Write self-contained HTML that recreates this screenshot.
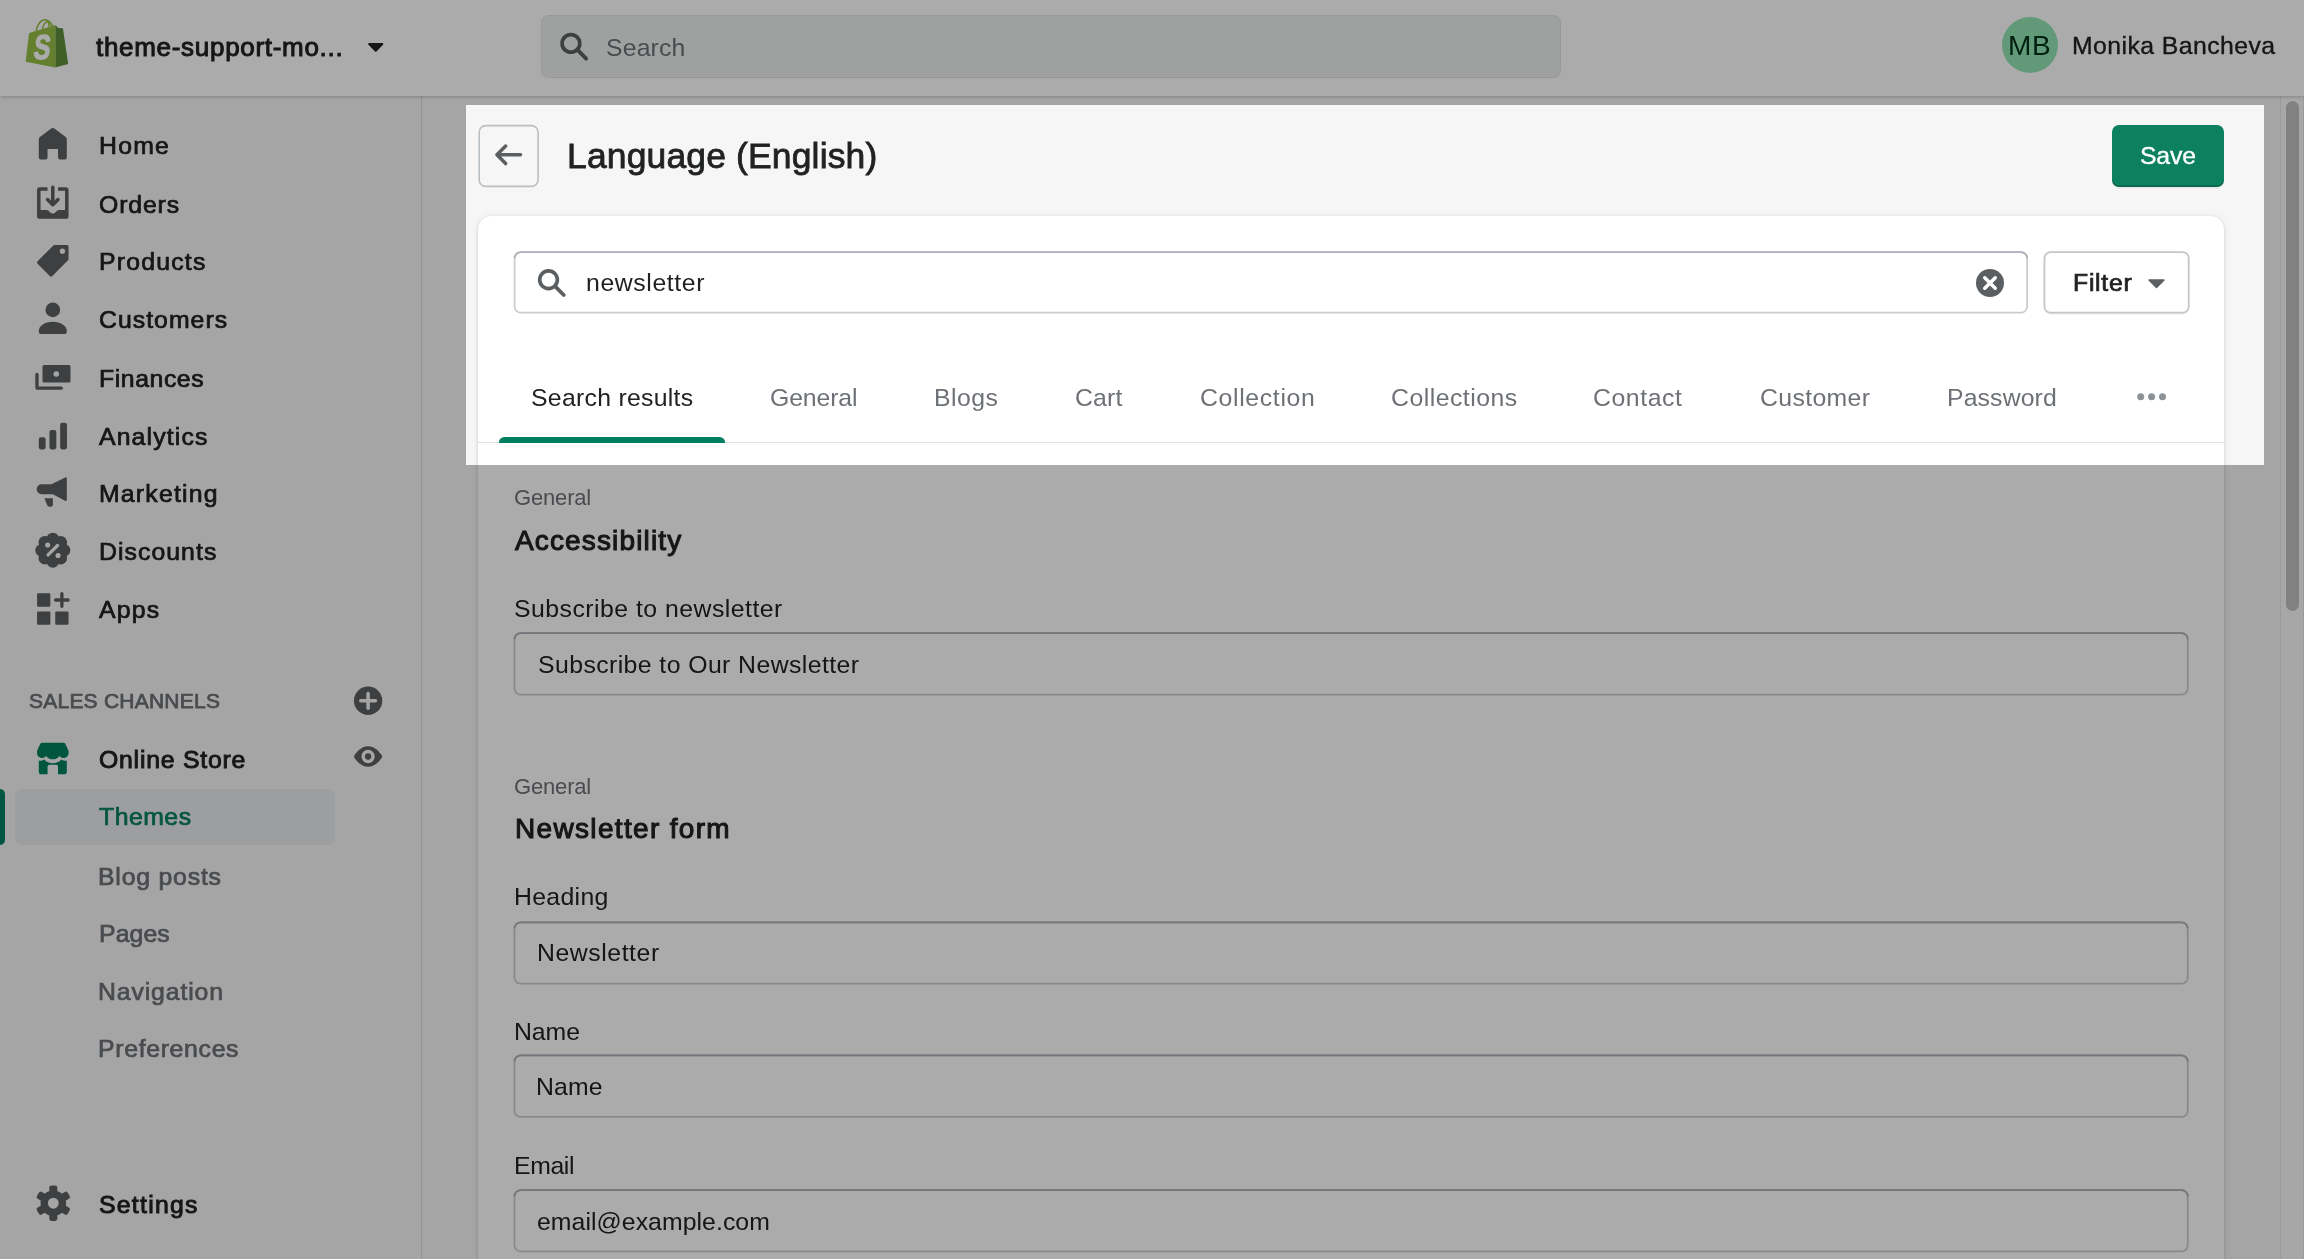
<!DOCTYPE html>
<html lang="en">
<head>
<meta charset="utf-8">
<title>Language (English) - Themes - Shopify</title>
<style>
*{box-sizing:border-box;margin:0;padding:0}
html,body{width:2304px;height:1259px;overflow:hidden;background:#f6f6f7}
body{position:relative;font-family:"Liberation Sans",sans-serif;color:#202223;-webkit-font-smoothing:antialiased}
.abs,.t,svg.i{position:absolute}
.t{display:block;line-height:1;white-space:nowrap;will-change:transform;font-weight:400;font-style:normal;text-decoration:none;margin:0;padding:0}
svg.i{display:block;overflow:visible;will-change:transform}
#topbar{left:0;top:0;width:2304px;height:96px;background:#fff;box-shadow:0 2px 3.5px -1px rgba(0,0,0,.22)}
#tsearch{left:541px;top:15px;width:1020px;height:63px;background:#eef0ef;border:1px solid #e1e3e3;border-radius:7.5px}
#avatar{left:2001.5px;top:17px;width:56px;height:56px;border-radius:50%;background:#92e6b5}
#sidebar{left:0;top:96px;width:422px;height:1163px;background:#f6f6f7;border-right:1px solid #dcdee0}
#sel{left:14.5px;top:789px;width:320.5px;height:55.5px;border-radius:7px;background:#ebecef}
#selbar{left:0;top:789px;width:5px;height:55.5px;border-radius:0 7px 7px 0;background:#008060}
#back{left:478.5px;top:125px;width:60.5px;height:61.5px;border:2px solid #c1c5c9;border-radius:7.5px}
#save{left:2112px;top:125px;width:112px;height:61.5px;border-radius:7px;background:#0c805f;box-shadow:0 1.75px 0 rgba(0,0,0,.05),inset 0 -1.75px 0 rgba(0,0,0,.2)}
#card{left:478px;top:215.5px;width:1745.5px;height:1100px;border-radius:14px;background:#fff;box-shadow:0 0 8.75px rgba(23,24,24,.05),0 1.75px 3.5px rgba(0,0,0,.15)}
.inp{left:514px;width:1675px;height:63px;border:2px solid #cfd2d5;border-top-color:#b5babf;border-radius:7.5px;background:#fff}
#filter{left:2043.5px;top:251px;width:146px;height:63px;border:2px solid #cfd2d5;border-radius:7px;background:#fff;box-shadow:0 1.75px 0 rgba(0,0,0,.05)}
#tabline{left:478px;top:442px;width:1745.5px;height:1px;background:#dfe1e3}
#tabind{left:498.75px;top:436.75px;width:226px;height:6px;border-radius:5.25px 5.25px 0 0;background:#008060}
#strack{left:2280px;top:96px;width:24px;height:1163px;background:#fafafa;border-left:1px solid #e6e6e6;border-right:1px solid #e6e6e6}
#sthumb{left:2285.5px;top:100.5px;width:13.25px;height:510.25px;border-radius:7px;background:#c1c1c1}
#hl{left:465.5px;top:105px;width:1798px;height:360px;box-shadow:0 0 0 4000px rgba(0,0,0,.33);z-index:50;pointer-events:none}

</style>
</head>
<body>
<main>
<div id="card" class="abs"></div>
<div id="save" class="abs"></div>
<div id="tabline" class="abs"></div>
<div id="tabind" class="abs"></div>
<svg class="i" style="left:0px;top:0px" width="2304" height="1259" viewBox="0 0 2304 1259" fill="none"><rect x="514.58" y="252.07" width="1512.55" height="60.55" rx="6.2" fill="#fff" stroke="#c9cccf" stroke-width="1.75"/><path d="M514.58 258.27a6.2 6.2 0 0 1 6.2-6.2H2020.92a6.2 6.2 0 0 1 6.2 6.2" stroke="#aeb4b9" stroke-width="1.75"/><rect x="2044.47" y="253.27" width="144.25" height="60.55" rx="6.2" stroke="rgba(0,0,0,.06)" stroke-width="1.75"/><rect x="2044.47" y="252.07" width="144.25" height="60.55" rx="6.2" fill="#fff" stroke="#c3c7cb" stroke-width="1.75"/><rect x="514.48" y="633.08" width="1673.25" height="61.65" rx="6.2" fill="#fff" stroke="#c9cccf" stroke-width="1.75"/><path d="M514.48 639.28a6.2 6.2 0 0 1 6.2-6.2H2181.53a6.2 6.2 0 0 1 6.2 6.2" stroke="#aeb4b9" stroke-width="1.75"/><rect x="514.48" y="922.33" width="1673.25" height="61.25" rx="6.2" fill="#fff" stroke="#c9cccf" stroke-width="1.75"/><path d="M514.48 928.53a6.2 6.2 0 0 1 6.2-6.2H2181.53a6.2 6.2 0 0 1 6.2 6.2" stroke="#aeb4b9" stroke-width="1.75"/><rect x="514.48" y="1055.38" width="1673.25" height="61.45" rx="6.2" fill="#fff" stroke="#c9cccf" stroke-width="1.75"/><path d="M514.48 1061.58a6.2 6.2 0 0 1 6.2-6.2H2181.53a6.2 6.2 0 0 1 6.2 6.2" stroke="#aeb4b9" stroke-width="1.75"/><rect x="514.48" y="1190.08" width="1673.25" height="61.25" rx="6.2" fill="#fff" stroke="#c9cccf" stroke-width="1.75"/><path d="M514.48 1196.28a6.2 6.2 0 0 1 6.2-6.2H2181.53a6.2 6.2 0 0 1 6.2 6.2" stroke="#aeb4b9" stroke-width="1.75"/></svg>
<svg class="i" style="left:477px;top:123px" width="64" height="66" viewBox="0 0 64 66"><rect x="2.200" y="2.600" width="58.900" height="60.800" rx="6.600" fill="none" stroke="#babfc3" stroke-width="1.600"/></svg>
<svg class="i" style="left:490px;top:137px" width="35" height="35" viewBox="0 0 20 20" fill="#5c5f62"><g transform="translate(0.343 0.171)"><path d="M17.100 10H4M8.600 5L3.600 10l5 5" stroke="#5c5f62" stroke-width="2" stroke-linecap="round" stroke-linejoin="round" fill="none"/></g></svg>
<svg class="i" style="left:534px;top:265px" width="35" height="35" viewBox="0 0 20 20" fill="#5c5f62"><circle cx="8.300" cy="8.450" r="5.050" fill="none" stroke="#5c5f62" stroke-width="2.100"/><path d="M12.200 12.350l4.800 4.800" stroke="#5c5f62" stroke-width="2.200" stroke-linecap="round" fill="none"/></svg>
<svg class="i" style="left:1972px;top:265px" width="35" height="35" viewBox="0 0 20 20" fill="#5c5f62"><g transform="translate(0.286 0.286)"><circle cx="10" cy="10" r="8"/><path d="M7 7l6 6M13 7l-6 6" stroke="#fff" stroke-width="2" stroke-linecap="round" fill="none"/></g></svg>
<svg class="i" style="left:2148px;top:279px" width="17" height="10" viewBox="0 0 17 10" fill="#5c5f62"><path transform="translate(0 .250)" d="M1 0h15a.700.700 0 0 1 .5 1.200L9 8.700a.700.700 0 0 1-1 0L.5 1.200A.700.700 0 0 1 1 0z"/></svg>
<svg class="i" style="left:2137px;top:393px" width="30" height="8" viewBox="0 0 30 8" fill="#8c9196"><circle cx="3.700" cy="3.800" r="3.500"/><circle cx="14.600" cy="3.800" r="3.500"/><circle cx="25.500" cy="3.800" r="3.500"/></svg>
<h1 class="t" style="left:567px;top:139px;font-size:35.5px;letter-spacing:0.14px;color:#202223;-webkit-text-stroke:0.8px #202223;">Language (English)</h1>
<div class="t" style="left:2140px;top:144px;font-size:24.8px;letter-spacing:-0.2px;color:#ffffff;-webkit-text-stroke:0.35px #ffffff;">Save</div>
<div class="t" style="left:586px;top:271px;font-size:24.8px;letter-spacing:0.6px;color:#202223;">newsletter</div>
<div class="t" style="left:2073px;top:271px;font-size:24.8px;letter-spacing:0.73px;color:#202223;-webkit-text-stroke:0.74px #202223;">Filter</div>
<span class="t" style="left:531px;top:386px;font-size:24.8px;letter-spacing:0.28px;color:#202223;">Search results</span>
<span class="t" style="left:770px;top:386px;font-size:24.8px;letter-spacing:-0.11px;color:#6d7175;">General</span>
<span class="t" style="left:934px;top:386px;font-size:24.8px;letter-spacing:0.48px;color:#6d7175;">Blogs</span>
<span class="t" style="left:1075px;top:386px;font-size:24.8px;letter-spacing:0.2px;color:#6d7175;">Cart</span>
<span class="t" style="left:1200px;top:386px;font-size:24.8px;letter-spacing:0.66px;color:#6d7175;">Collection</span>
<span class="t" style="left:1391px;top:386px;font-size:24.8px;letter-spacing:0.49px;color:#6d7175;">Collections</span>
<span class="t" style="left:1593px;top:386px;font-size:24.8px;letter-spacing:0.57px;color:#6d7175;">Contact</span>
<span class="t" style="left:1760px;top:386px;font-size:24.8px;letter-spacing:0.36px;color:#6d7175;">Customer</span>
<span class="t" style="left:1947px;top:386px;font-size:24.8px;letter-spacing:0.13px;color:#6d7175;">Password</span>
<div class="t" style="left:514px;top:487px;font-size:22px;letter-spacing:-0.17px;color:#6d7175;">General</div>
<h2 class="t" style="left:515px;top:527px;font-size:28px;letter-spacing:1.14px;color:#202223;-webkit-text-stroke:1.04px #202223;">Accessibility</h2>
<label class="t" style="left:514px;top:597px;font-size:24.8px;letter-spacing:0.48px;color:#202223;">Subscribe to newsletter</label>
<div class="t" style="left:538px;top:653px;font-size:24.8px;letter-spacing:0.42px;color:#202223;">Subscribe to Our Newsletter</div>
<div class="t" style="left:514px;top:776px;font-size:22px;letter-spacing:-0.17px;color:#6d7175;">General</div>
<h2 class="t" style="left:515px;top:815px;font-size:28px;letter-spacing:1.33px;color:#202223;-webkit-text-stroke:1.04px #202223;">Newsletter form</h2>
<label class="t" style="left:514px;top:885px;font-size:24.8px;letter-spacing:0.33px;color:#202223;">Heading</label>
<div class="t" style="left:537px;top:941px;font-size:24.8px;letter-spacing:0.56px;color:#202223;">Newsletter</div>
<label class="t" style="left:514px;top:1020px;font-size:24.8px;letter-spacing:-0.07px;color:#202223;">Name</label>
<div class="t" style="left:536px;top:1075px;font-size:24.8px;letter-spacing:0.13px;color:#202223;">Name</div>
<label class="t" style="left:514px;top:1154px;font-size:24.8px;letter-spacing:-0.38px;color:#202223;">Email</label>
<div class="t" style="left:537px;top:1210px;font-size:24.8px;letter-spacing:0.06px;color:#202223;">email@example.com</div>
<div id="strack" class="abs"></div>
<div id="sthumb" class="abs"></div>
</main>
<nav>
<div id="sidebar" class="abs"></div>
<div id="sel" class="abs"></div>
<div id="selbar" class="abs"></div>
<svg class="i" style="left:35px;top:126px" width="35" height="35" viewBox="0 0 20 20" fill="#5c5f62"><g transform="translate(0.171 0.171)"><path d="M18 7.26V17.5A1.5 1.5 0 0 1 16.5 19h-2a1.5 1.5 0 0 1-1.5-1.5V13H7v4.5A1.5 1.5 0 0 1 5.5 19h-2A1.5 1.5 0 0 1 2 17.500V7.260a1.5 1.5 0 0 1 .61-1.21l6.500-4.770a1.500 1.500 0 0 1 1.780 0l6.500 4.770A1.500 1.500 0 0 1 18 7.260z"/></g></svg>
<svg class="i" style="left:35px;top:185px" width="35" height="35" viewBox="0 0 20 20" fill="#5c5f62"><g transform="translate(0.171 0.286)"><path d="M11 1a1 1 0 1 0-2 0v7.586L7.707 7.293a1 1 0 0 0-1.414 1.414l3 3a1 1 0 0 0 1.414 0l3-3a1 1 0 0 0-1.414-1.414L11 8.586V1z"/><path d="M3 14V3h4V1H2.5A1.5 1.5 0 0 0 1 2.5v15A1.5 1.5 0 0 0 2.5 19h15a1.5 1.5 0 0 0 1.5-1.5v-15A1.5 1.5 0 0 0 17.5 1H13v2h4v11h-3.5c-.775 0-1.388.662-1.926 1.244l-.11.120A1.994 1.994 0 0 1 10 16a1.994 1.994 0 0 1-1.463-.637l-.111-.12C7.888 14.664 7.275 14 6.5 14H3z"/></g></svg>
<svg class="i" style="left:35px;top:243px" width="35" height="35" viewBox="0 0 20 20" fill="#5c5f62"><g transform="translate(0.171 0.171)"><path fill-rule="evenodd" d="M10.293 1.293A1 1 0 0 1 11 1h7a1 1 0 0 1 1 1v7a1 1 0 0 1-.293.707l-9 9a1 1 0 0 1-1.414 0l-7-7a1 1 0 0 1 0-1.414l9-9zM15.5 6a1.5 1.5 0 1 0 0-3 1.5 1.5 0 0 0 0 3z"/></g></svg>
<svg class="i" style="left:35px;top:300px" width="35" height="35" viewBox="0 0 20 20" fill="#5c5f62"><g transform="translate(0.171 0.457)"><circle cx="10" cy="5.2" r="4.2"/><path d="M2 17.2C2 14.300 5.600 12 10 12s8 2.300 8 5.200v.3A1.500 1.500 0 0 1 16.500 19h-13A1.500 1.500 0 0 1 2 17.500z"/></g></svg>
<svg class="i" style="left:35px;top:359px" width="35" height="35" viewBox="0 0 20 20" fill="#5c5f62"><g transform="translate(0.171 0.514)"><path fill-rule="evenodd" d="M5 2.950h14.200a.900.900 0 0 1 .9.900v8.200a.900.900 0 0 1-.9.900H5a.900.900 0 0 1-.9-.900v-8.200a.900.900 0 0 1 .9-.900zM12 9.700a1.600 1.600 0 1 0 0-3.200 1.600 1.600 0 0 0 0 3.200z"/><path d="M0 8.250a.950.950 0 0 1 1.900 0v6.950h12.950a.950.950 0 0 1 0 1.900H1.500A1.500 1.500 0 0 1 0 15.600z"/></g></svg>
<svg class="i" style="left:35px;top:417px" width="35" height="35" viewBox="0 0 20 20" fill="#5c5f62"><g transform="translate(0.171 0.4)"><rect x="2" y="11.200" width="3.900" height="6.900" rx="1.200"/><rect x="8.100" y="7" width="3.900" height="11.100" rx="1.200"/><rect x="14.200" y="2.900" width="3.900" height="15.200" rx="1.200"/></g></svg>
<svg class="i" style="left:35px;top:474px" width="35" height="35" viewBox="0 0 20 20" fill="#5c5f62"><g transform="translate(0.171 0.514)"><path d="M17 1.500a.700.700 0 0 1 1 .630V14.200a.700.700 0 0 1-1 .630L10.060 11.100H3.650A2.850 2.850 0 0 1 3.650 5.400H9.250z"/><path d="M5.200 13.300H10.060V17a1.200 1.200 0 0 1-1.200 1.200H8a1.300 1.300 0 0 1-1.200-.800z"/></g></svg>
<svg class="i" style="left:35px;top:532px" width="35" height="35" viewBox="0 0 20 20" fill="#5c5f62"><g transform="translate(0.171 0.4)"><circle cx="10" cy="10" r="8.300"/><circle cx="10.00" cy="3.60" r="3.600"/><circle cx="14.53" cy="5.47" r="3.600"/><circle cx="16.40" cy="10.00" r="3.600"/><circle cx="14.53" cy="14.53" r="3.600"/><circle cx="10.00" cy="16.40" r="3.600"/><circle cx="5.47" cy="14.53" r="3.600"/><circle cx="3.60" cy="10.00" r="3.600"/><circle cx="5.47" cy="5.47" r="3.600"/><path d="M7.300 12.700l5.400-5.400" stroke="#f6f6f7" stroke-width="1.900" stroke-linecap="round" fill="none"/><circle cx="7.050" cy="7.050" r="1.450" fill="#f6f6f7"/><circle cx="13" cy="13" r="1.450" fill="#f6f6f7"/></g></svg>
<svg class="i" style="left:35px;top:591px" width="35" height="35" viewBox="0 0 20 20" fill="#5c5f62"><g transform="translate(0.171 0.343)"><rect x="1" y="1" width="7.600" height="7.600" rx=".600"/><rect x="1" y="11.400" width="7.600" height="7.600" rx=".600"/><rect x="11.400" y="11.400" width="7.600" height="7.600" rx=".600"/><path d="M15.200 1.200v7.200M11.600 4.800h7.200" stroke="#5c5f62" stroke-width="1.900" stroke-linecap="round" fill="none"/></g></svg>
<svg class="i" style="left:35px;top:741px" width="35" height="35" viewBox="0 0 20 20" fill="#007f5f"><g transform="translate(0.171 0.0)"><path d="M3.900 1h12.200a1.200 1.200 0 0 1 1.100.700L19 5.500v1.300a2.900 2.900 0 0 1-5.200 1.760 4.700 4.700 0 0 1-7.600 0A2.900 2.900 0 0 1 1 6.800V5.500l1.800-3.800A1.200 1.200 0 0 1 3.900 1z"/><path d="M2 11.100c.900.300 2 .200 3.100-.500a6.700 6.700 0 0 0 9.800 0c1.100.700 2.200.800 3.100.500V17.500a1.500 1.500 0 0 1-1.500 1.500H13v-4.500a1 1 0 0 0-1-1H8a1 1 0 0 0-1 1V19H3.500A1.500 1.500 0 0 1 2 17.500z"/></g></svg>
<svg class="i" style="left:35px;top:1185px" width="35" height="35" viewBox="0 0 20 20" fill="#5c5f62"><g transform="translate(0.457 0.4)"><rect x="7.700" y="-.150" width="4.600" height="5.500" rx="1.200" transform="rotate(0 10 10)"/><rect x="7.700" y="-.150" width="4.600" height="5.500" rx="1.200" transform="rotate(60 10 10)"/><rect x="7.700" y="-.150" width="4.600" height="5.500" rx="1.200" transform="rotate(120 10 10)"/><rect x="7.700" y="-.150" width="4.600" height="5.500" rx="1.200" transform="rotate(180 10 10)"/><rect x="7.700" y="-.150" width="4.600" height="5.500" rx="1.200" transform="rotate(240 10 10)"/><rect x="7.700" y="-.150" width="4.600" height="5.500" rx="1.200" transform="rotate(300 10 10)"/><path fill-rule="evenodd" d="M10 2.700a7.300 7.300 0 1 0 0 14.600 7.300 7.300 0 0 0 0-14.600zM10 6.900a3.100 3.100 0 1 1 0 6.200 3.100 3.100 0 0 1 0-6.200z"/></g></svg>
<svg class="i" style="left:350px;top:683px" width="35" height="35" viewBox="0 0 20 20" fill="#5c5f62"><g transform="translate(0.343 0.171)"><circle cx="10" cy="10" r="8.100"/><path d="M10 5.800v8.400M5.800 10h8.400" stroke="#f6f6f7" stroke-width="2" stroke-linecap="round" fill="none"/></g></svg>
<svg class="i" style="left:351px;top:739px" width="33.2" height="33.2" viewBox="0 0 20 20" fill="#5c5f62"><g transform="translate(0.301 0.542)"><path fill-rule="evenodd" d="M18.300 9.400c.300.400.300.800 0 1.200C17.200 12.300 14.300 16.200 10 16.200S2.800 12.300 1.700 10.600c-.300-.400-.300-.800 0-1.200C2.800 7.700 5.700 3.800 10 3.800s7.200 3.900 8.300 5.600zM10 14a4 4 0 1 0 0-8 4 4 0 0 0 0 8zm0-2.100a1.900 1.900 0 1 0 0-3.800 1.900 1.900 0 0 0 0 3.800z"/></g></svg>
<a class="t" style="left:99px;top:134px;font-size:24.8px;letter-spacing:1.23px;color:#202223;-webkit-text-stroke:0.74px #202223;">Home</a>
<a class="t" style="left:99px;top:193px;font-size:24.8px;letter-spacing:0.87px;color:#202223;-webkit-text-stroke:0.74px #202223;">Orders</a>
<a class="t" style="left:99px;top:250px;font-size:24.8px;letter-spacing:1.21px;color:#202223;-webkit-text-stroke:0.74px #202223;">Products</a>
<a class="t" style="left:99px;top:308px;font-size:24.8px;letter-spacing:1.03px;color:#202223;-webkit-text-stroke:0.74px #202223;">Customers</a>
<a class="t" style="left:99px;top:367px;font-size:24.8px;letter-spacing:0.57px;color:#202223;-webkit-text-stroke:0.74px #202223;">Finances</a>
<a class="t" style="left:99px;top:425px;font-size:24.8px;letter-spacing:1.14px;color:#202223;-webkit-text-stroke:0.74px #202223;">Analytics</a>
<a class="t" style="left:99px;top:482px;font-size:24.8px;letter-spacing:1.21px;color:#202223;-webkit-text-stroke:0.74px #202223;">Marketing</a>
<a class="t" style="left:99px;top:540px;font-size:24.8px;letter-spacing:1.05px;color:#202223;-webkit-text-stroke:0.74px #202223;">Discounts</a>
<a class="t" style="left:99px;top:598px;font-size:24.8px;letter-spacing:1.17px;color:#202223;-webkit-text-stroke:0.74px #202223;">Apps</a>
<h3 class="t" style="left:29px;top:690px;font-size:21px;letter-spacing:0.23px;color:#6d7175;-webkit-text-stroke:0.75px #6d7175;">SALES CHANNELS</h3>
<a class="t" style="left:99px;top:748px;font-size:24.8px;letter-spacing:0.77px;color:#202223;-webkit-text-stroke:0.92px #202223;">Online Store</a>
<a class="t" style="left:99px;top:805px;font-size:24.8px;letter-spacing:0.49px;color:#077f5e;-webkit-text-stroke:0.74px #077f5e;">Themes</a>
<a class="t" style="left:98px;top:865px;font-size:24.8px;letter-spacing:0.8px;color:#6d7175;-webkit-text-stroke:0.74px #6d7175;">Blog posts</a>
<a class="t" style="left:99px;top:922px;font-size:24.8px;letter-spacing:0.1px;color:#6d7175;-webkit-text-stroke:0.74px #6d7175;">Pages</a>
<a class="t" style="left:98px;top:980px;font-size:24.8px;letter-spacing:0.87px;color:#6d7175;-webkit-text-stroke:0.74px #6d7175;">Navigation</a>
<a class="t" style="left:98px;top:1037px;font-size:24.8px;letter-spacing:0.68px;color:#6d7175;-webkit-text-stroke:0.74px #6d7175;">Preferences</a>
<a class="t" style="left:99px;top:1193px;font-size:24.8px;letter-spacing:1.26px;color:#202223;-webkit-text-stroke:0.92px #202223;">Settings</a>
</nav>
<header>
<div id="topbar" class="abs"></div>
<div id="tsearch" class="abs"></div>
<div id="avatar" class="abs"></div>
<svg class="i" style="left:20px;top:15px" width="50" height="56" viewBox="0 0 50 56" fill="#5c5f62"><path d="M35.3 10.05 L38.2 13 L42.9 13.3 L48.2 49.1 L35.3 52.4z" fill="#5e8e3e"/><path d="M9.1 18 L35.3 10.05 L35.3 52.4 L5.6 46.8z" fill="#95bf47"/><path d="M16.2 15.6C17.5 9.500 21 4.600 24.700 4.700c3.200.100 6.200 3 7.700 6.300" fill="none" stroke="#95bf47" stroke-width="1.600"/><path d="M22.300 13.800C23.300 9.800 25.800 6.500 28.200 6.400c1.500 0 2.600 1.800 3 4.400M28.200 6.400c.500 1.500.700 3.500.700 5.400" fill="none" stroke="#95bf47" stroke-width="1.500"/><text transform="translate(12.800 43.600) scale(.720 1) skewX(-9)" font-family="Liberation Sans, sans-serif" font-weight="700" font-size="34.500" fill="#fff" stroke="#fff" stroke-width="1.300" stroke-linejoin="round">S</text></svg>
<svg class="i" style="left:368px;top:43px" width="15.500" height="9" viewBox="0 0 15.500 9" fill="#202223"><path d="M1.200 0h13.100a1 1 0 0 1 .75 1.700L8.500 8.600a1 1 0 0 1-1.450 0L.45 1.700A1 1 0 0 1 1.200 0z"/></svg>
<svg class="i" style="left:556px;top:28px" width="35" height="35" viewBox="0 0 20 20" fill="#5c5f62"><g transform="translate(0.229 0.343)"><circle cx="8.300" cy="8.450" r="5.050" fill="none" stroke="#5c5f62" stroke-width="2.100"/><path d="M12.200 12.350l4.800 4.800" stroke="#5c5f62" stroke-width="2.200" stroke-linecap="round" fill="none"/></g></svg>
<div class="t" style="left:96px;top:34px;font-size:26px;letter-spacing:0.7px;color:#202223;-webkit-text-stroke:0.96px #202223;">theme-support-mo...</div>
<div class="t" style="left:606px;top:36px;font-size:24.8px;letter-spacing:0.15px;color:#6d7175;">Search</div>
<div class="t" style="left:2008px;top:32px;font-size:28px;letter-spacing:0.61px;color:#002f19;">MB</div>
<div class="t" style="left:2072px;top:34px;font-size:24.8px;letter-spacing:0.43px;color:#202223;-webkit-text-stroke:0.35px #202223;">Monika Bancheva</div>
</header>
<div id="hl" class="abs"></div>

</body>
</html>
